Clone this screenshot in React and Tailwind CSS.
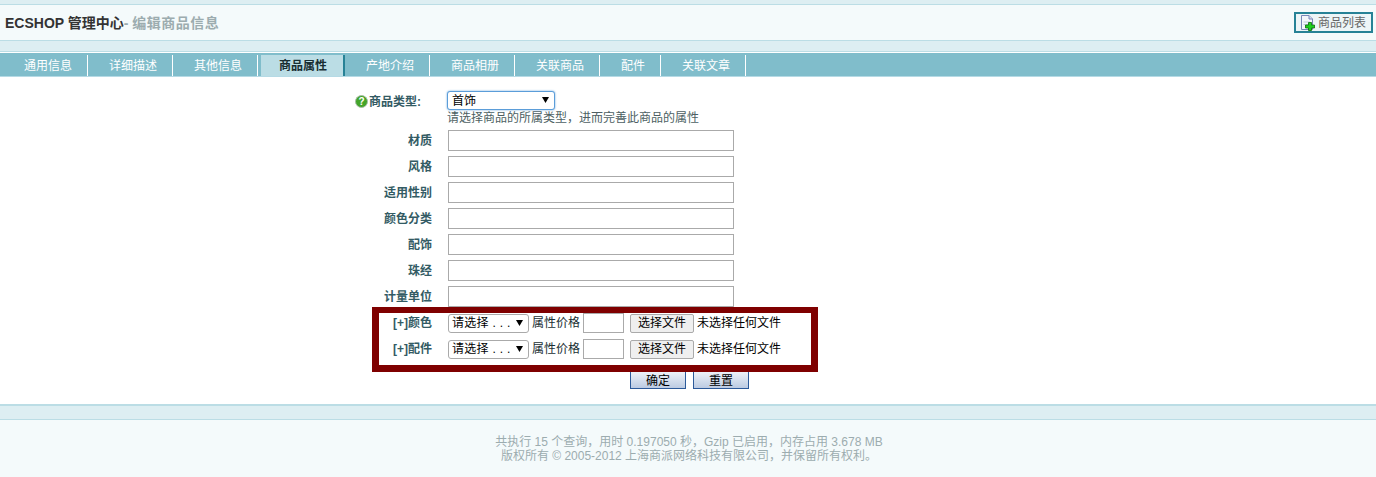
import React from "react";

const tabs = [
  { name: "通用信息", width: "w-[85px] ml-[3px] pl-[6px]" },
  { name: "详细描述", width: "w-[85px] pl-[6px]" },
  { name: "其他信息", width: "w-[85px] pl-[6px]" },
  { name: "商品属性", active: true },
  { name: "产地介绍", width: "w-[85px] pl-[6px]" },
  { name: "商品相册", width: "w-[85px] pl-[6px]" },
  { name: "关联商品", width: "w-[85px] pl-[6px]" },
  { name: "配件", width: "w-[61px] pl-[6px]" },
  { name: "关联文章", width: "w-[85px] pl-[6px]" },
];

const attrs = ["材质", "风格", "适用性别", "颜色分类", "配饰", "珠经", "计量单位"];
const specs = ["颜色", "配件"];

const HelpIcon = () => (
  <svg width="13" height="13" viewBox="0 0 13 13" className="shrink-0">
    <circle cx="6.5" cy="6.5" r="6" fill="#43a52a" stroke="#a8bda6" />
    <text x="6.5" y="10" textAnchor="middle" fontSize="10" fontWeight="700" fill="#fff" fontFamily="Liberation Sans">?</text>
  </svg>
);

const AddIcon = () => (
  <svg width="14" height="16" viewBox="0 0 14 16" className="shrink-0">
    <path d="M0.5 0.5H8L11.5 4V14.5H0.5Z" fill="#f4f6fb" stroke="#7a86b8" />
    <path d="M8 0.5V4H11.5" fill="#d5daee" stroke="#7a86b8" />
    <path d="M2.5 7H9M2.5 9.5H7" stroke="#c2c8dc" />
    <path d="M7.5 7.5H10.5V10H13.5V13H10.5V15.5H7.5V13H4.5V10H7.5Z" fill="#1fd01f" stroke="#0a6a0a" strokeWidth="0.8" />
  </svg>
);

const Select = ({ className, children }) => (
  <div className="relative w-fit">
    <select className={`block appearance-none bg-white text-[12px] text-black ${className}`}>
      <option>{children}</option>
    </select>
    <svg width="7" height="6" viewBox="0 0 7 6" className="absolute right-[6px] top-[6px] pointer-events-none">
      <path d="M0 0H7L3.5 6Z" fill="#000" />
    </svg>
  </div>
);

export default function App() {
  return (
    <div className="w-[1376px] h-[477px] overflow-hidden bg-[#f4fafb] text-[12px] leading-[14px] text-[#192e32] font-['Liberation_Sans','Noto_Sans_CJK_SC',sans-serif]">
      <div className="h-[4px] bg-[#ddeef2]" />
      <div className="h-[37px] flex items-center justify-between bg-[#f4fafb] border-y border-[#bbdde5] pl-[5px] pr-[3px]">
        <h1 className="text-[14px] font-bold leading-[18px] text-[#9cacaf]">
          <span className="text-[#333]">ECSHOP 管理中心</span>- <span className="tracking-[0.5px]">编辑商品信息</span>
        </h1>
        <button className="w-[79px] h-[21px] flex items-center gap-[3px] pl-[5px] border-2 border-[#278296] bg-[#edf5f7] text-[#666]">
          <AddIcon />
          商品列表
        </button>
      </div>
      <div className="h-[10px] bg-[#ddeef2]" />
      <div className="h-[26px] border-t border-[#bbdde5] bg-white pt-px">
        <div className="h-[25px] flex items-end bg-[#80bdcb] border-b-2 border-[#b5dae5]">
          {tabs.map((tab) =>
            tab.active ? (
              <div
                key={tab.name}
                className="w-[84px] h-[21px] ml-[3px] pt-px pl-[2px] flex items-center justify-center bg-[#bbdde5] border-r-2 border-[#278296] font-bold text-[#192e32]"
              >
                {tab.name}
              </div>
            ) : (
              <div
                key={tab.name}
                className={`${tab.width} h-[21px] pt-px flex items-center justify-center border-r border-white text-white`}
              >
                {tab.name}
              </div>
            )
          )}
        </div>
      </div>

      <div className="relative h-[327px] pt-[14px] bg-white">
        <div className="flex">
          <div className="w-[355px]" />
          <div className="w-[70px] h-[34px] flex items-start gap-px pt-[4px] font-bold text-[#335b64]">
            <HelpIcon />
            <span>商品类型:</span>
          </div>
          <div className="ml-[22px]">
            <Select className="w-[108px] h-[19px] pl-[4px] border border-[#5b9dd9] rounded-[3px] shadow-[0_0_2px_#5b9dd9]">首饰</Select>
            <div className="mt-[1px] text-[#4d5f63]">请选择商品的所属类型，进而完善此商品的属性</div>
          </div>
        </div>

        <div className="flex flex-col gap-[5px] mt-[5px]">
          {attrs.map((a) => (
            <div key={a} className="flex items-center">
              <div className="w-[432px] text-right font-bold text-[#335b64]">{a}</div>
              <input className="ml-[16px] w-[286px] h-[21px] bg-white border border-[#aaa]" />
            </div>
          ))}
        </div>

        <div className="flex flex-col gap-[6px] mt-[6px]">
          {specs.map((s) => (
            <div key={s} className="flex items-center h-[20px]">
              <div className="w-[432px] text-right font-bold text-[#335b64]">
                <span className="text-[#335b64]">[+]</span>
                {s}
              </div>
              <div className="ml-[16px]">
                <Select className="w-[81px] h-[19px] pl-[3px] border border-[#aaa] rounded-[3px] tracking-[0.3px]">请选择 . . .</Select>
              </div>
              <span className="ml-[3px] w-[51px]">属性价格</span>
              <input className="w-[41px] h-[20px] bg-white border border-[#aaa]" />
              <button className="ml-[6px] w-[64px] h-[19px] bg-[#efefef] border border-[#aaa] rounded-[2px] text-black">
                选择文件
              </button>
              <span className="ml-[3px] text-black">未选择任何文件</span>
            </div>
          ))}
        </div>

        <div className="flex gap-[7px] ml-[630px] mt-[12px]">
          <button className="w-[56px] h-[18px] pt-[2px] border border-[#2c5a9a] bg-gradient-to-b from-[#eef2f8] to-[#bccbe2] leading-[14px] text-black">
            确定
          </button>
          <button className="w-[56px] h-[18px] pt-[2px] border border-[#2c5a9a] bg-gradient-to-b from-[#eef2f8] to-[#bccbe2] leading-[14px] text-black">
            重置
          </button>
        </div>

        {/* red annotation frame drawn over the form */}
        <div className="absolute left-[372px] top-[230px] w-[446px] h-[65px] border-[7px] border-t-[6px] border-[#7f0000] pointer-events-none" />
      </div>

      <div className="h-[15px] border-t-2 border-[#bbdde5] bg-[#ddeef2]" />
      <div className="h-px bg-[#bbdde5]" />
      <div className="pt-[15px] text-center text-[#9cacaf] bg-[#f4fafb]">
        <div className="w-[1378px]">共执行 15 个查询，用时 0.197050 秒，Gzip 已启用，内存占用 3.678 MB</div>
        <div className="w-[1378px]">版权所有 © 2005-2012 上海商派网络科技有限公司，并保留所有权利。</div>
      </div>
    </div>
  );
}
